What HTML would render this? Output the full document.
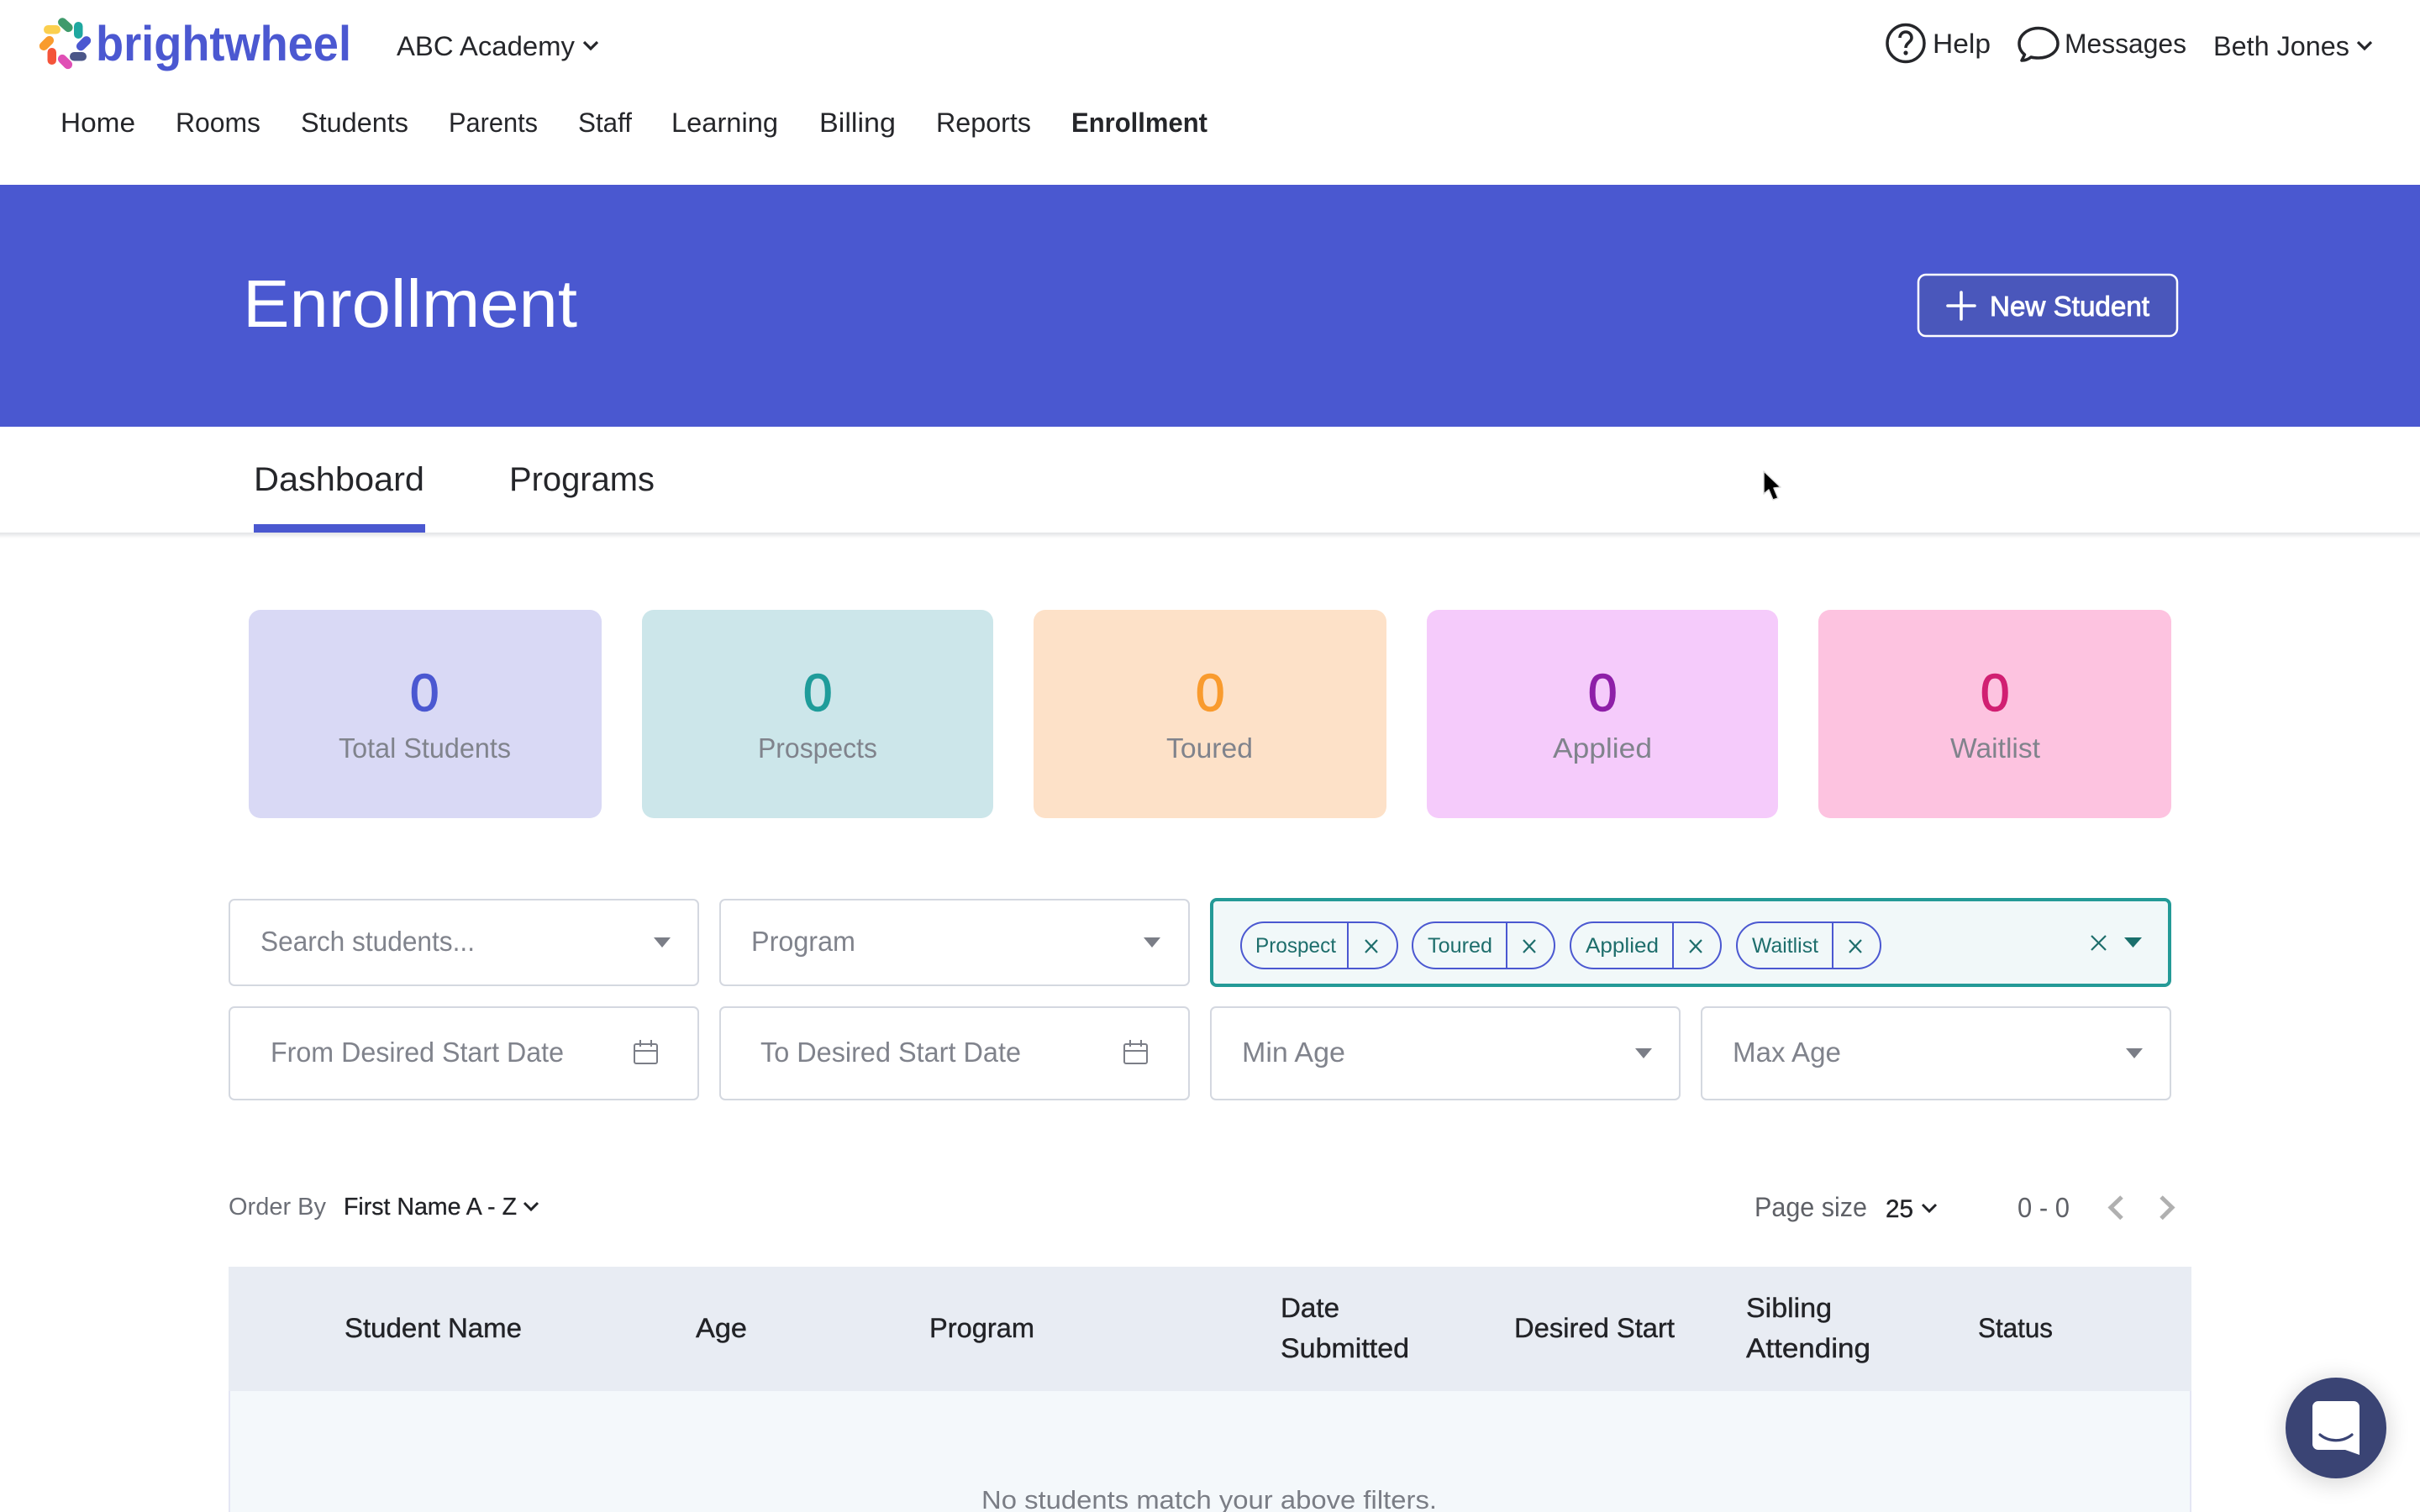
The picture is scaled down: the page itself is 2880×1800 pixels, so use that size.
<!DOCTYPE html>
<html lang="en"><head><meta charset="utf-8"><title>Enrollment</title>
<style>
html,body{margin:0;padding:0;background:#fff;width:2880px;height:1800px;overflow:hidden}
svg{display:block;position:absolute;left:0;top:0}
text{font-family:"Liberation Sans",sans-serif;white-space:pre}
.n{font-size:32px;fill:#25262a}
.ph{font-size:33px;fill:#80838c}
.th{font-size:32px;fill:#222327;stroke:#222327;stroke-width:.4px}
.tg{font-size:25px;fill:#1e6e6c}
.lb{font-size:33px;fill:#80838c}
.num{font-size:62px;stroke-width:1.4px}
</style></head><body>
<svg width="2880" height="1800" viewBox="0 0 2880 1800" xmlns="http://www.w3.org/2000/svg">
<defs>
<filter id="sh" x="-40%" y="-40%" width="180%" height="180%"><feGaussianBlur stdDeviation="14"/></filter>
<linearGradient id="tabsh" x1="0" y1="0" x2="0" y2="1"><stop offset="0" stop-color="#e2e3e6"/><stop offset="1" stop-color="#fff"/></linearGradient>
</defs>
<rect width="2880" height="1800" fill="#fff"/>

<!-- logo -->
<g>
<rect x="68" y="24.500" width="20" height="10.500" rx="5.250" fill="#3f9a6b" transform="rotate(42 78 29.500)"/>
<rect x="88" y="26" width="10.500" height="20" rx="5.250" fill="#1fa8a0"/>
<rect x="89.500" y="46.500" width="20" height="10.500" rx="5.250" fill="#4b58d1" transform="rotate(-45 99.500 51.700)"/>
<rect x="83" y="62" width="20" height="10.500" rx="5.250" fill="#4b5688"/>
<rect x="67.500" y="68.300" width="20" height="10.500" rx="5.250" fill="#e04fb5" transform="rotate(45 77.500 73.500)"/>
<rect x="56.500" y="57" width="10.500" height="20" rx="5.250" fill="#f4543a"/>
<rect x="45.500" y="46.200" width="20" height="10.500" rx="5.250" fill="#f99b2e" transform="rotate(-45 55.500 51.500)"/>
<rect x="52" y="30" width="20" height="10.500" rx="5.250" fill="#fbcf4e"/>
</g>
<text x="114" y="72" font-size="58" font-weight="700" fill="#4b58d1" textLength="304" lengthAdjust="spacingAndGlyphs">brightwheel</text>
<text class="n" x="472" y="66" textLength="212" lengthAdjust="spacingAndGlyphs">ABC Academy</text>
<path d="M695 50l8 8 8-8" fill="none" stroke="#25262a" stroke-width="3.200"/>

<!-- top right -->
<circle cx="2268" cy="51.500" r="22" fill="none" stroke="#25262a" stroke-width="3.500"/>
<path d="M2261 45c0-4 3-7 7-7s7 3 7 7c0 5-7 6-7 12" fill="none" stroke="#25262a" stroke-width="3.600"/>
<circle cx="2268" cy="63" r="2.600" fill="#25262a"/>
<text class="n" x="2300" y="63" textLength="69" lengthAdjust="spacingAndGlyphs">Help</text>
<path d="M2426 33.500c-13 0-23 8.500-23 18.500 0 5 2 9.500 6.500 13l-3.500 7c5 0 8-1.500 11-4 3 .8 6 1 9 1 13 0 23-7.500 23-17 0-10-10-18.500-23-18.500z" fill="none" stroke="#25262a" stroke-width="3.500" stroke-linejoin="round"/>
<text class="n" x="2457" y="63" textLength="145" lengthAdjust="spacingAndGlyphs">Messages</text>
<text class="n" x="2634" y="66" textLength="162" lengthAdjust="spacingAndGlyphs">Beth Jones</text>
<path d="M2806 50l8 8 8-8" fill="none" stroke="#25262a" stroke-width="3.200"/>

<!-- nav -->
<text class="n" x="72" y="157" textLength="89" lengthAdjust="spacingAndGlyphs">Home</text>
<text class="n" x="209" y="157" textLength="101" lengthAdjust="spacingAndGlyphs">Rooms</text>
<text class="n" x="358" y="157" textLength="128" lengthAdjust="spacingAndGlyphs">Students</text>
<text class="n" x="534" y="157" textLength="106" lengthAdjust="spacingAndGlyphs">Parents</text>
<text class="n" x="688" y="157" textLength="64" lengthAdjust="spacingAndGlyphs">Staff</text>
<text class="n" x="799" y="157" textLength="127" lengthAdjust="spacingAndGlyphs">Learning</text>
<text class="n" x="975" y="157" textLength="91" lengthAdjust="spacingAndGlyphs">Billing</text>
<text class="n" x="1114" y="157" textLength="113" lengthAdjust="spacingAndGlyphs">Reports</text>
<text class="n" x="1275" y="157" font-weight="700" textLength="162" lengthAdjust="spacingAndGlyphs">Enrollment</text>

<!-- hero -->
<rect x="0" y="220" width="2880" height="288" fill="#4a58d0"/>
<text x="289" y="389" font-size="80" fill="#fff" textLength="398" lengthAdjust="spacingAndGlyphs">Enrollment</text>
<rect x="2283" y="327" width="308" height="73" rx="9" fill="#4a57bb" stroke="#fff" stroke-width="2.500"/>
<path d="M2318 364h32M2334 348v32" stroke="#fff" stroke-width="3.600" stroke-linecap="round"/>
<text x="2368" y="376" font-size="33" fill="#fff" stroke="#fff" stroke-width=".9" textLength="190" lengthAdjust="spacingAndGlyphs">New Student</text>

<!-- tabs -->
<rect x="0" y="634" width="2880" height="7" fill="url(#tabsh)"/>
<text x="302" y="584" font-size="40" fill="#25262a" textLength="203" lengthAdjust="spacingAndGlyphs">Dashboard</text>
<text x="606" y="584" font-size="40" fill="#25262a" textLength="173" lengthAdjust="spacingAndGlyphs">Programs</text>
<rect x="302" y="624" width="204" height="10" fill="#4a58d0"/>

<!-- cursor -->
<path d="M2099 561l0 27 6-5 5 12 6-2-5-12 8-1z" fill="#000" stroke="#ddd" stroke-width="1.500" stroke-linejoin="round"/>

<!-- cards -->
<rect x="296" y="726" width="420" height="248" rx="14" fill="#d9d9f5"/>
<rect x="764" y="726" width="418" height="248" rx="14" fill="#cce6ea"/>
<rect x="1230" y="726" width="420" height="248" rx="14" fill="#fde1c8"/>
<rect x="1698" y="726" width="418" height="248" rx="14" fill="#f5cbfb"/>
<rect x="2164" y="726" width="420" height="248" rx="14" fill="#fdc3e0"/>
<text class="num" x="488" y="846" fill="#4b58d1" stroke="#4b58d1">0</text>
<text class="num" x="956" y="846" fill="#1f9c9a" stroke="#1f9c9a">0</text>
<text class="num" x="1423" y="846" fill="#f99b2e" stroke="#f99b2e">0</text>
<text class="num" x="1890" y="846" fill="#8e1fa8" stroke="#8e1fa8">0</text>
<text class="num" x="2357" y="846" fill="#d11f72" stroke="#d11f72">0</text>
<text class="lb" x="403" y="902" textLength="205" lengthAdjust="spacingAndGlyphs">Total Students</text>
<text class="lb" x="902" y="902" textLength="142" lengthAdjust="spacingAndGlyphs">Prospects</text>
<text class="lb" x="1388" y="902" textLength="103" lengthAdjust="spacingAndGlyphs">Toured</text>
<text class="lb" x="1848" y="902" textLength="118" lengthAdjust="spacingAndGlyphs">Applied</text>
<text class="lb" x="2321" y="902" textLength="107" lengthAdjust="spacingAndGlyphs">Waitlist</text>

<!-- filters row 1 -->
<rect x="273" y="1071" width="558" height="102" rx="6" fill="#fff" stroke="#d4d8e0" stroke-width="2"/>
<text class="ph" x="310" y="1132" textLength="255" lengthAdjust="spacingAndGlyphs">Search students...</text>
<path d="M778 1116h20l-10 12z" fill="#7b7e87"/>
<rect x="857" y="1071" width="558" height="102" rx="6" fill="#fff" stroke="#d4d8e0" stroke-width="2"/>
<text class="ph" x="894" y="1132" textLength="124" lengthAdjust="spacingAndGlyphs">Program</text>
<path d="M1361 1116h20l-10 12z" fill="#7b7e87"/>
<rect x="1442" y="1071" width="1140" height="102" rx="6" fill="#f1f8f9" stroke="#249a97" stroke-width="4"/>

<!-- tags -->
<g fill="none" stroke="#4b58d1" stroke-width="2">
<rect x="1477" y="1098" width="186" height="55" rx="27.500"/><path d="M1604 1098v55"/>
<rect x="1681" y="1098" width="169" height="55" rx="27.500"/><path d="M1793 1098v55"/>
<rect x="1869" y="1098" width="179" height="55" rx="27.500"/><path d="M1991 1098v55"/>
<rect x="2067" y="1098" width="171" height="55" rx="27.500"/><path d="M2181 1098v55"/>
</g>
<text class="tg" x="1494" y="1134" textLength="96" lengthAdjust="spacingAndGlyphs">Prospect</text>
<text class="tg" x="1699" y="1134" textLength="77" lengthAdjust="spacingAndGlyphs">Toured</text>
<text class="tg" x="1887" y="1134" textLength="87" lengthAdjust="spacingAndGlyphs">Applied</text>
<text class="tg" x="2085" y="1134" textLength="79" lengthAdjust="spacingAndGlyphs">Waitlist</text>
<g fill="none" stroke="#1e6e6c" stroke-width="2.200">
<path d="M1625 1119l14 15m0-15l-14 15"/>
<path d="M1813 1119l14 15m0-15l-14 15"/>
<path d="M2011 1119l14 15m0-15l-14 15"/>
<path d="M2201 1119l14 15m0-15l-14 15"/>
<path d="M2489 1114l17 17m0-17l-17 17"/>
</g>
<path d="M2528 1116h21l-10.500 12z" fill="#1a6f6c"/>

<!-- filters row 2 -->
<rect x="273" y="1199" width="558" height="110" rx="6" fill="#fff" stroke="#d4d8e0" stroke-width="2"/>
<text class="ph" x="322" y="1264" textLength="349" lengthAdjust="spacingAndGlyphs">From Desired Start Date</text>
<g fill="none" stroke="#7b7e87" stroke-width="2">
<rect x="755" y="1243" width="27" height="23" rx="2"/><path d="M755 1251h27M762 1238v8M775 1238v8"/>
</g>
<rect x="857" y="1199" width="558" height="110" rx="6" fill="#fff" stroke="#d4d8e0" stroke-width="2"/>
<text class="ph" x="905" y="1264" textLength="310" lengthAdjust="spacingAndGlyphs">To Desired Start Date</text>
<g fill="none" stroke="#7b7e87" stroke-width="2">
<rect x="1338" y="1243" width="27" height="23" rx="2"/><path d="M1338 1251h27M1345 1238v8M1358 1238v8"/>
</g>
<rect x="1441" y="1199" width="558" height="110" rx="6" fill="#fff" stroke="#d4d8e0" stroke-width="2"/>
<text class="ph" x="1478" y="1264" textLength="123" lengthAdjust="spacingAndGlyphs">Min Age</text>
<path d="M1946 1248h20l-10 12z" fill="#7b7e87"/>
<rect x="2025" y="1199" width="558" height="110" rx="6" fill="#fff" stroke="#d4d8e0" stroke-width="2"/>
<text class="ph" x="2062" y="1264" textLength="129" lengthAdjust="spacingAndGlyphs">Max Age</text>
<path d="M2530 1248h20l-10 12z" fill="#7b7e87"/>

<!-- order / paging -->
<text x="272" y="1446" font-size="29" fill="#6b6e76" textLength="116" lengthAdjust="spacingAndGlyphs">Order By</text>
<text x="409" y="1446" font-size="29" fill="#222327" stroke="#222327" stroke-width=".3" textLength="206" lengthAdjust="spacingAndGlyphs">First Name A - Z</text>
<path d="M624 1432l8 8 8-8" fill="none" stroke="#222327" stroke-width="3"/>
<text x="2088" y="1448" font-size="32" fill="#5f6167" textLength="134" lengthAdjust="spacingAndGlyphs">Page size</text>
<text x="2244" y="1449" font-size="30" fill="#222327" stroke="#222327" stroke-width=".4" textLength="33" lengthAdjust="spacingAndGlyphs">25</text>
<path d="M2288 1434l8 8 8-8" fill="none" stroke="#222327" stroke-width="3"/>
<text x="2401" y="1449" font-size="33" fill="#5f6167" textLength="62" lengthAdjust="spacingAndGlyphs">0 - 0</text>
<path d="M2525 1425l-13 12.500 13 13" fill="none" stroke="#b0b0b0" stroke-width="5"/>
<path d="M2572 1425l13 12.500-13 13" fill="none" stroke="#b0b0b0" stroke-width="5"/>

<!-- table -->
<rect x="272" y="1656" width="2336" height="150" fill="#f4f8fb"/>
<rect x="272" y="1656" width="2" height="144" fill="#e4e6f4"/>
<rect x="2606" y="1656" width="2" height="144" fill="#e4e6f4"/>
<rect x="272" y="1508" width="2336" height="148" fill="#e8ecf3"/>
<text class="th" x="410" y="1592" textLength="211" lengthAdjust="spacingAndGlyphs">Student Name</text>
<text class="th" x="828" y="1592" textLength="61" lengthAdjust="spacingAndGlyphs">Age</text>
<text class="th" x="1106" y="1592" textLength="125" lengthAdjust="spacingAndGlyphs">Program</text>
<text class="th" x="1524" y="1568" textLength="70" lengthAdjust="spacingAndGlyphs">Date</text>
<text class="th" x="1524" y="1616" textLength="153" lengthAdjust="spacingAndGlyphs">Submitted</text>
<text class="th" x="1802" y="1592" textLength="191" lengthAdjust="spacingAndGlyphs">Desired Start</text>
<text class="th" x="2078" y="1568" textLength="102" lengthAdjust="spacingAndGlyphs">Sibling</text>
<text class="th" x="2078" y="1616" textLength="148" lengthAdjust="spacingAndGlyphs">Attending</text>
<text class="th" x="2354" y="1592" textLength="89" lengthAdjust="spacingAndGlyphs">Status</text>
<text x="1168" y="1796" font-size="31" fill="#7a7d85" textLength="542" lengthAdjust="spacingAndGlyphs">No students match your above filters.</text>

<!-- chat launcher -->
<circle cx="2780" cy="1704" r="62" fill="#000" opacity=".16" filter="url(#sh)"/>
<circle cx="2780" cy="1700" r="60" fill="#3a4474"/>
<path d="M2759 1668h42a7 7 0 0 1 7 7v57l-17-6h-32a7 7 0 0 1-7-7v-44a7 7 0 0 1 7-7z" fill="#fff"/>
<path d="M2761 1708c11 9 27 9 38 0" fill="none" stroke="#3a4474" stroke-width="3.200" stroke-linecap="round"/>
</svg>
</body></html>
